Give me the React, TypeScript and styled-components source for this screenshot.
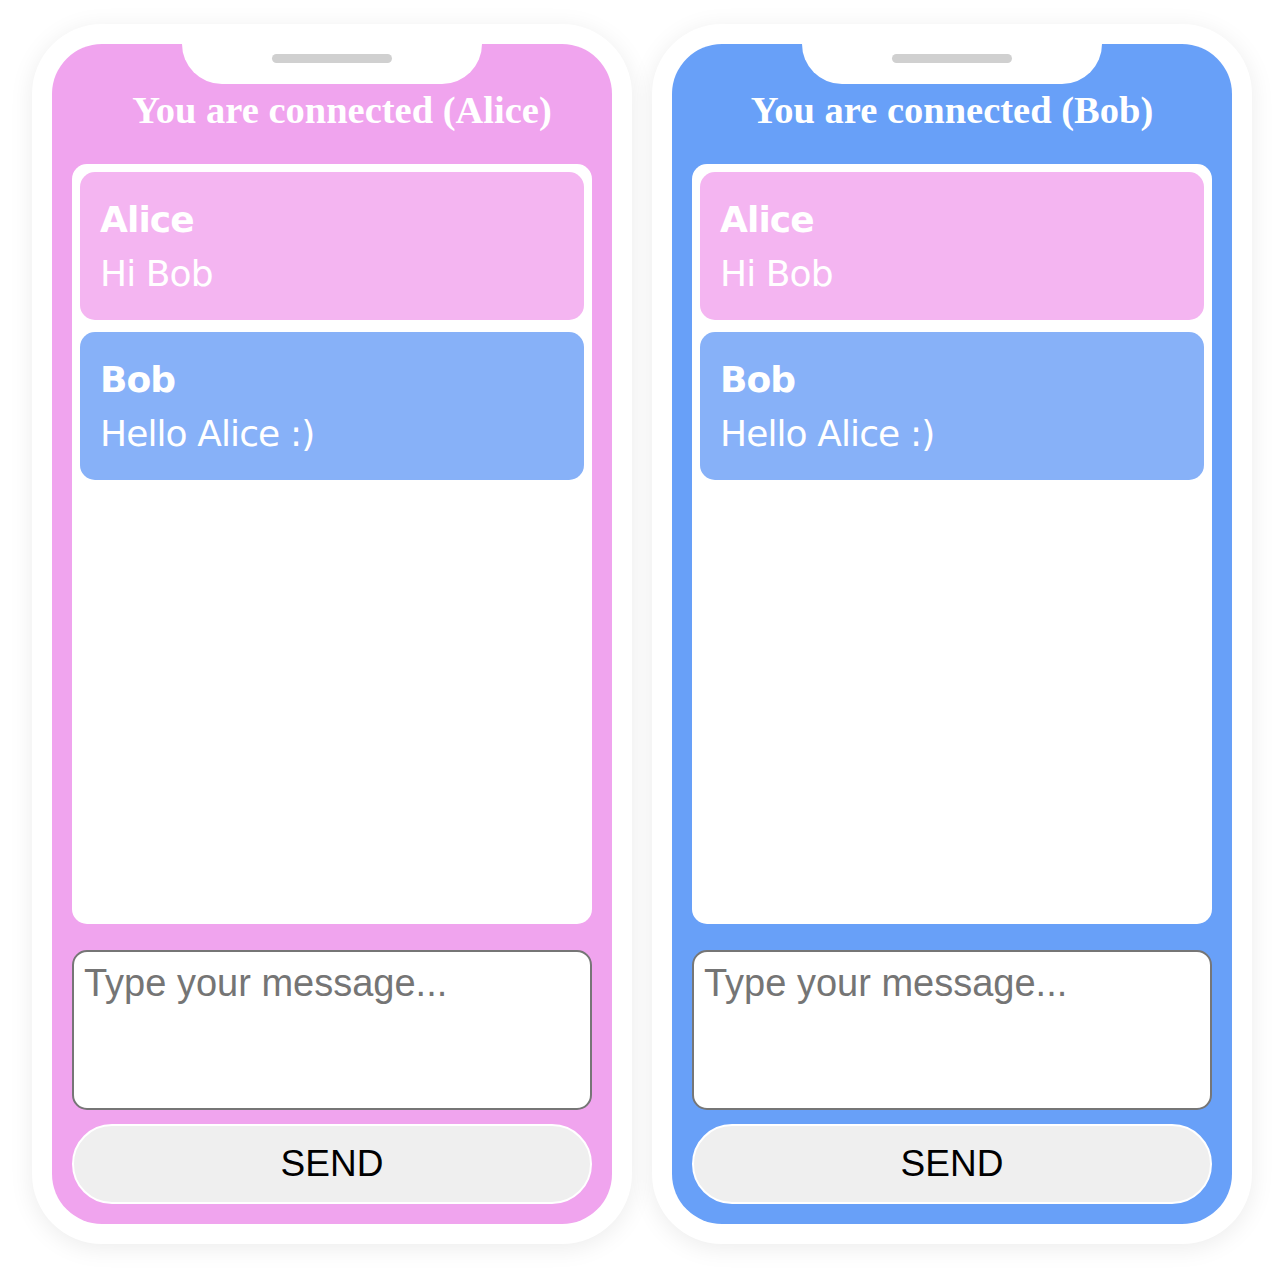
import React from "react";
import styled, { createGlobalStyle } from "styled-components";

const Global = createGlobalStyle`
  html, body { margin: 0; padding: 0; background: #ffffff; }
  * { box-sizing: border-box; }
`;

const Page = styled.div`
  display: flex;
  gap: 20px;
  padding: 24px 28px 38px 32px;
`;

const Phone = styled.div`
  width: 600px;
  height: 1220px;
  padding: 20px;
  background: #ffffff;
  border-radius: 70px;
  box-shadow: 0 4px 24px rgba(0, 0, 0, 0.08);
`;

const Screen = styled.div<{ $bg: string }>`
  position: relative;
  height: 100%;
  background: ${(p) => p.$bg};
  border-radius: 50px;
  padding: 0 20px 20px;
  display: flex;
  flex-direction: column;
`;

const Notch = styled.div`
  position: absolute;
  top: 0;
  left: 50%;
  transform: translateX(-50%);
  width: 300px;
  height: 40px;
  background: #ffffff;
  border-radius: 0 0 40px 40px;
`;

const Speaker = styled.div`
  position: absolute;
  top: 10px;
  left: 50%;
  transform: translateX(-50%);
  width: 120px;
  height: 9px;
  border-radius: 5px;
  background: #d0d0d0;
`;

const Header = styled.div<{ $shift: number }>`
  height: 120px;
  padding-top: 46px;
  padding-left: ${(p) => p.$shift}px;
  text-align: center;
`;

const Title = styled.h1`
  margin: 0;
  font-family: "Liberation Serif", "Times New Roman", serif;
  font-weight: bold;
  font-size: 38.5px;
  line-height: 40px;
  color: #ffffff;
`;

const Chat = styled.div`
  height: 760px;
  background: #ffffff;
  border-radius: 15px;
  padding: 8px;
  display: flex;
  flex-direction: column;
  gap: 12px;
`;

const Message = styled.div<{ $bg: string }>`
  background: ${(p) => p.$bg};
  border-radius: 15px;
  padding: 23px 20px 21px;
  color: #ffffff;
  font-family: "DejaVu Sans", Verdana, sans-serif;
  font-size: 36px;
  line-height: 50px;
  letter-spacing: -0.9px;
`;

const Author = styled.div`
  font-weight: bold;
`;

const Body = styled.div`
  margin-top: 4px;
  font-weight: normal;
`;

const Input = styled.textarea`
  margin-top: 26px;
  height: 160px;
  width: 100%;
  resize: none;
  border: 2px solid #767676;
  border-radius: 15px;
  background: #ffffff;
  padding: 10px 10px;
  font-family: "Liberation Sans", Arial, sans-serif;
  font-size: 38px;
  line-height: 42px;
  color: #222;
  outline: none;
  &::placeholder { color: #757575; }
`;

const SendButton = styled.button`
  margin-top: 14px;
  height: 80px;
  width: 100%;
  border: 2px solid #ffffff;
  border-radius: 40px;
  background: #efefef;
  color: #000000;
  font-family: "Liberation Sans", Arial, sans-serif;
  font-size: 37px;
  cursor: pointer;
`;

const PINK = "#f0a4ee";
const BLUE = "#68a0f8";
const PINK_MSG = "#f4b5f1";
const BLUE_MSG = "#87b1f8";

const messages = [
  { author: "Alice", text: "Hi Bob", color: PINK_MSG },
  { author: "Bob", text: "Hello Alice :)", color: BLUE_MSG },
];

const PhoneView: React.FC<{ user: string; bg: string; shift: number }> = ({ user, bg, shift }) => (
  <Phone>
    <Screen $bg={bg}>
      <Notch>
        <Speaker />
      </Notch>
      <Header $shift={shift}>
        <Title>You are connected ({user})</Title>
      </Header>
      <Chat>
        {messages.map((m, i) => (
          <Message key={i} $bg={m.color}>
            <Author>{m.author}</Author>
            <Body>{m.text}</Body>
          </Message>
        ))}
      </Chat>
      <Input placeholder="Type your message..." />
      <SendButton>SEND</SendButton>
    </Screen>
  </Phone>
);

export default function App() {
  return (
    <>
      <Global />
      <Page>
        <PhoneView user="Alice" bg={PINK} shift={20} />
        <PhoneView user="Bob" bg={BLUE} shift={0} />
      </Page>
    </>
  );
}
